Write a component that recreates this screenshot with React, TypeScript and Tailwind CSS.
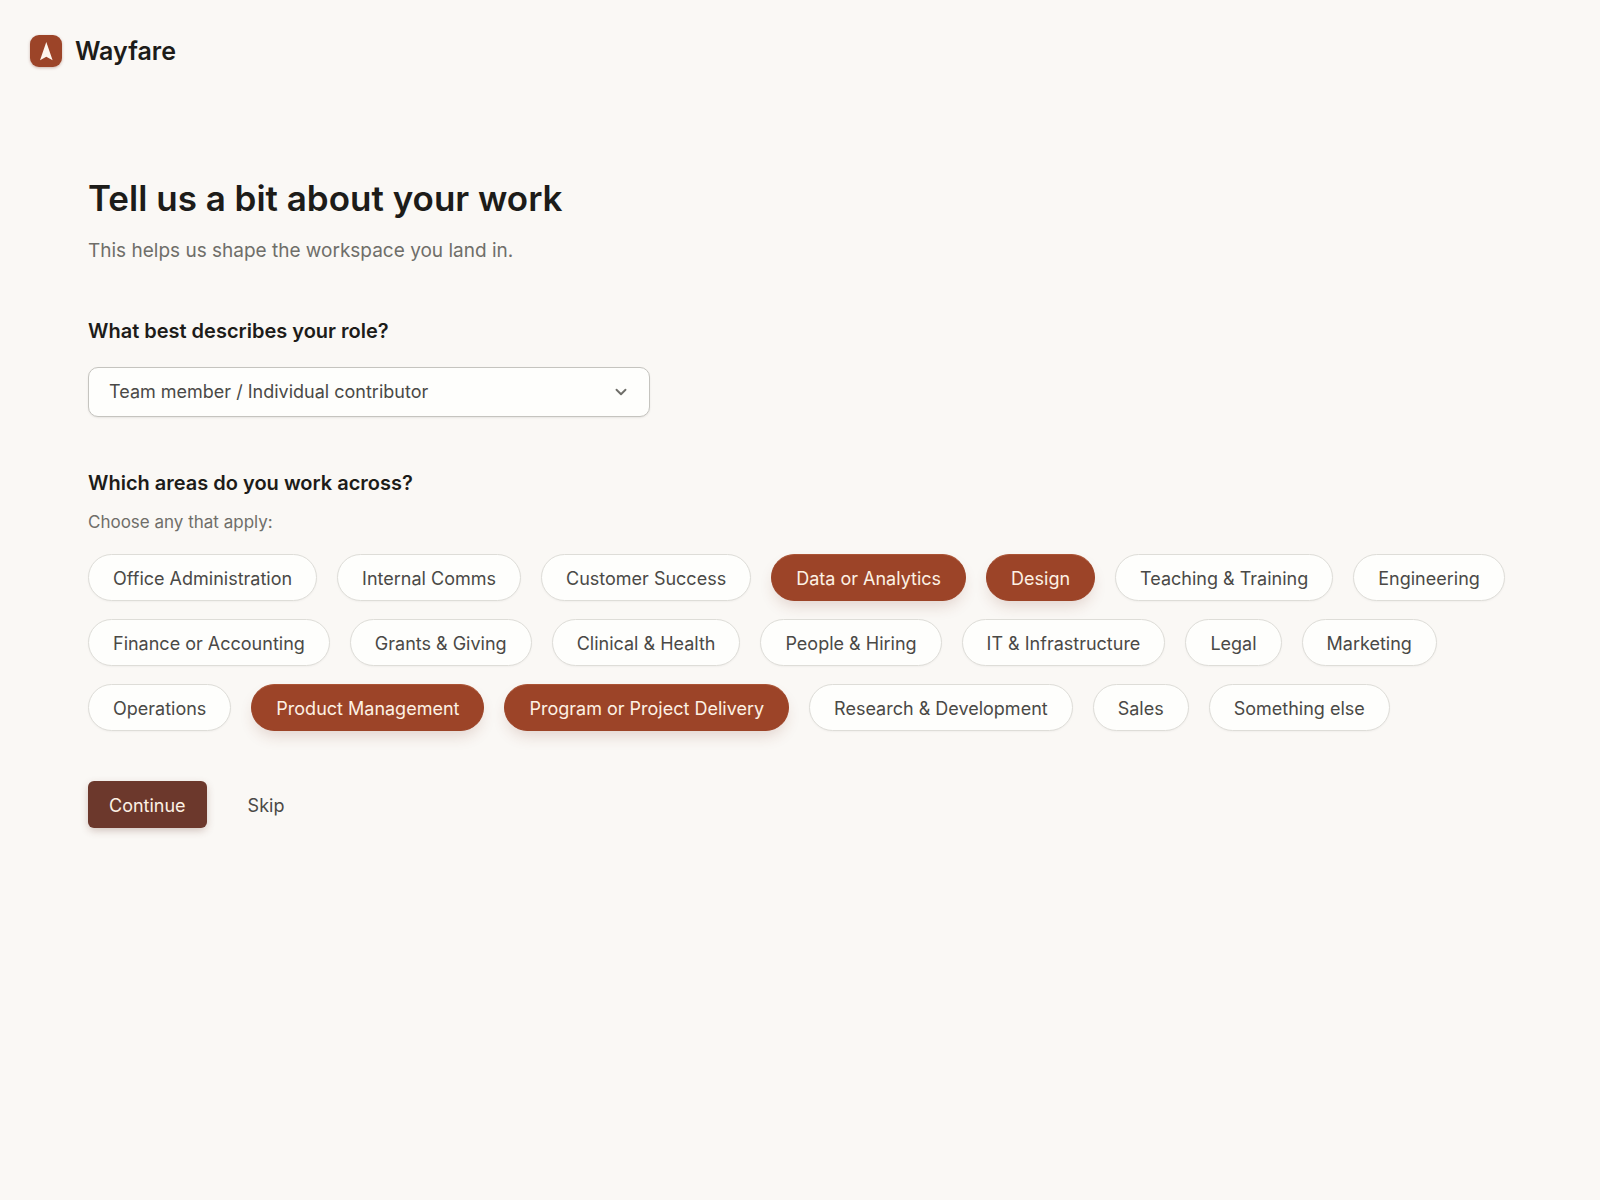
import { useState } from "react";
import { ChevronDown } from "lucide-react";
import clsx from "clsx";

const roles = [
  "Team member / Individual contributor",
  "Team lead / Manager",
  "Director / Department head",
  "Executive / Founder",
];

const areas = [
  "Office Administration",
  "Internal Comms",
  "Customer Success",
  "Data or Analytics",
  "Design",
  "Teaching & Training",
  "Engineering",
  "Finance or Accounting",
  "Grants & Giving",
  "Clinical & Health",
  "People & Hiring",
  "IT & Infrastructure",
  "Legal",
  "Marketing",
  "Operations",
  "Product Management",
  "Program or Project Delivery",
  "Research & Development",
  "Sales",
  "Something else",
];

interface ChipProps {
  label: string;
  selected: boolean;
  onToggle: () => void;
}

function Chip({ label, selected, onToggle }: ChipProps) {
  return (
    <button
      type="button"
      aria-pressed={selected}
      onClick={onToggle}
      className={clsx(
        "h-[47px] rounded-full border px-6 pt-0.5 text-lg whitespace-nowrap",
        selected
          ? "border-[#9c4428] border-t-[#ab5435] bg-[#9c4428] text-[#fdf1e4] shadow-[0_8px_16px_-4px_rgba(120,50,30,0.2)]"
          : "border-[#deddd8] bg-[#fefefc] text-[#4a4946] shadow-[0_1px_2px_rgba(0,0,0,0.04)]"
      )}
    >
      {label}
    </button>
  );
}

function Logo() {
  return (
    <a href="#" className="flex items-center gap-[13px]">
      <span className="flex size-8 items-center justify-center rounded-[9px] bg-[#9c4428] shadow-[0_1px_3px_rgba(120,50,30,0.35)]">
        <svg viewBox="0 0 32 32" className="size-8" aria-hidden="true">
          <path d="M16.3 7 L22.6 25.2 L16.3 21.8 L10 25.2 Z" fill="#fdf6ee" />
        </svg>
      </span>
      <span className="text-[25px] leading-8 font-semibold">Wayfare</span>
    </a>
  );
}

export default function App() {
  const [role, setRole] = useState(roles[0]);
  const [selected, setSelected] = useState([
    "Data or Analytics",
    "Design",
    "Product Management",
    "Program or Project Delivery",
  ]);

  const toggle = (area: string) =>
    setSelected((prev) =>
      prev.includes(area) ? prev.filter((a) => a !== area) : [...prev, area]
    );

  return (
    <div className="min-h-screen bg-[#faf8f5] font-['Inter',sans-serif] text-[#1d1c19]">
      <header className="flex px-[30px] pt-[35px]">
        <Logo />
      </header>

      <main className="px-[88px] pt-[107px] pb-20">
        <h1 className="text-[35px] leading-12 font-semibold">
          Tell us a bit about your work
        </h1>
        <p className="mt-[17px] text-[19px] leading-6 text-[#6f6e69]">
          This helps us shape the workspace you land in.
        </p>

        <form onSubmit={(e) => e.preventDefault()}>
          <label
            htmlFor="role"
            className="mt-14 block text-xl leading-6 font-semibold"
          >
            What best describes your role?
          </label>
          <div className="mt-6 grid max-w-[562px] items-center">
            <select
              id="role"
              value={role}
              onChange={(e) => setRole(e.target.value)}
              className="col-start-1 row-start-1 h-[50px] w-full appearance-none rounded-[10px] border border-[#c5c4bf] bg-[#fefefc] pr-12 pl-5 text-lg text-[#4a4946] shadow-[0_1px_2px_rgba(0,0,0,0.08)]"
            >
              {roles.map((r) => (
                <option key={r}>{r}</option>
              ))}
            </select>
            <ChevronDown
              className="pointer-events-none col-start-1 row-start-1 mr-5 size-[18px] justify-self-end text-[#6f6e69]"
              strokeWidth={2.5}
              aria-hidden="true"
            />
          </div>

          <h2
            id="areas"
            className="mt-[54px] text-xl leading-6 font-semibold"
          >
            Which areas do you work across?
          </h2>
          <p className="mt-[15px] text-[17px] leading-6 text-[#6f6e69]">
            Choose any that apply:
          </p>
          <div
            role="group"
            aria-labelledby="areas"
            className="mt-5 flex flex-wrap gap-x-5 gap-y-[18px]"
          >
            {areas.map((area) => (
              <Chip
                key={area}
                label={area}
                selected={selected.includes(area)}
                onToggle={() => toggle(area)}
              />
            ))}
          </div>

          <div className="mt-[50px] flex items-center gap-5">
            <button
              type="submit"
              className="h-[47px] rounded-md bg-[#6c382c] px-[21px] pt-0.5 text-lg text-[#fdf1e4] shadow-[0_3px_8px_-1px_rgba(100,50,35,0.3)]"
            >
              Continue
            </button>
            <button
              type="button"
              className="h-[47px] px-[21px] pt-0.5 text-lg text-[#4a4946]"
            >
              Skip
            </button>
          </div>
        </form>
      </main>
    </div>
  );
}
